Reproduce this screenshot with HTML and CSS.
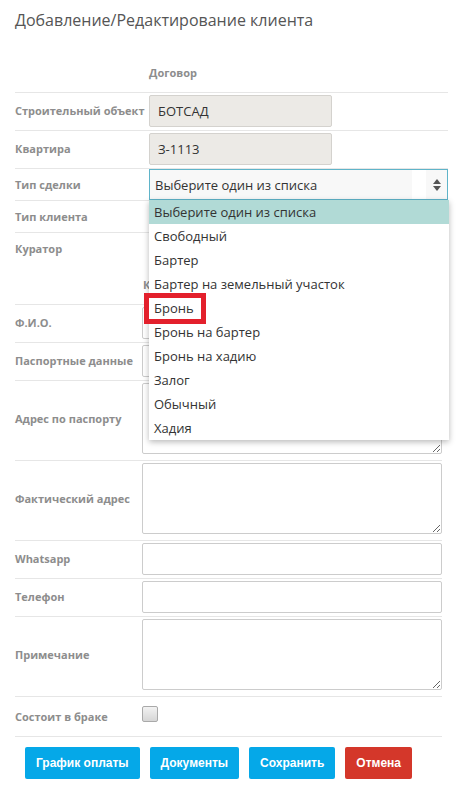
FILE: index.html
```html
<!DOCTYPE html>
<html lang="ru">
<head>
<meta charset="utf-8">
<title>Добавление/Редактирование клиента</title>
<link rel="stylesheet" href="styles.css">
</head>
<body>
<div class="page">
  <h1 class="title">Добавление/Редактирование клиента</h1>

  <section class="sec sec-top">
    <div class="sec-head"><span class="head-cell">Договор</span></div>
    <div class="row">
      <label class="lbl">Строительный объект</label>
      <div class="cell"><div class="inp inp-dis inp-short">БОТСАД</div></div>
    </div>
    <div class="row">
      <label class="lbl">Квартира</label>
      <div class="cell"><div class="inp inp-dis inp-short">З-1113</div></div>
    </div>
    <div class="row row-sel">
      <label class="lbl">Тип сделки</label>
      <div class="cell cell-rel">
        <div class="select">
          <span class="sel-text">Выберите один из списка</span>
          <span class="sel-gap"></span>
          <svg class="sel-arrows" width="10" height="16" viewBox="0 0 10 16"><path d="M5 2 L9 7 H1 Z" fill="#555"/><path d="M5 14 L9 9 H1 Z" fill="#555"/></svg>
        </div>
        <ul class="dropdown">
          <li class="opt opt-active">Выберите один из списка</li>
          <li class="opt">Свободный</li>
          <li class="opt">Бартер</li>
          <li class="opt">Бартер на земельный участок</li>
          <li class="opt">Бронь</li>
          <li class="opt">Бронь на бартер</li>
          <li class="opt">Бронь на хадию</li>
          <li class="opt">Залог</li>
          <li class="opt">Обычный</li>
          <li class="opt">Хадия</li>
          <li class="mark"></li>
        </ul>
      </div>
    </div>
    <div class="row row-sel">
      <label class="lbl">Тип клиента</label>
      <div class="cell"><div class="select select-plain"></div></div>
    </div>
    <div class="row row-sel">
      <label class="lbl">Куратор</label>
      <div class="cell"><div class="select select-plain"></div></div>
    </div>
  </section>

  <section class="sec sec-bottom">
    <div class="sec-head sec-head2"><span class="head-cell">К</span></div>
    <div class="row">
      <label class="lbl">Ф.И.О.</label>
      <div class="cell"><div class="inp"></div></div>
    </div>
    <div class="row">
      <label class="lbl">Паспортные данные</label>
      <div class="cell"><div class="inp"></div></div>
    </div>
    <div class="row row-ta">
      <label class="lbl">Адрес по паспорту</label>
      <div class="cell"><textarea class="ta"></textarea></div>
    </div>
    <div class="row row-ta">
      <label class="lbl">Фактический адрес</label>
      <div class="cell"><textarea class="ta"></textarea></div>
    </div>
    <div class="row">
      <label class="lbl">Whatsapp</label>
      <div class="cell"><div class="inp"></div></div>
    </div>
    <div class="row">
      <label class="lbl">Телефон</label>
      <div class="cell"><div class="inp"></div></div>
    </div>
    <div class="row row-ta">
      <label class="lbl">Примечание</label>
      <div class="cell"><textarea class="ta"></textarea></div>
    </div>
    <div class="row row-chk">
      <label class="lbl">Состоит в браке</label>
      <div class="cell"><span class="chk"></span></div>
    </div>
  </section>

  <div class="actions">
    <button class="btn btn-blue">График оплаты</button>
    <button class="btn btn-blue">Документы</button>
    <button class="btn btn-blue">Сохранить</button>
    <button class="btn btn-red">Отмена</button>
  </div>
</div>
</body>
</html>
```

FILE: styles.css
```css
* { box-sizing: border-box; }
html, body { margin: 0; padding: 0; background: #fff; }
body { font-family: "Open Sans", "Liberation Sans", sans-serif; color: #333; }

.page { padding: 0 0 0 15px; width: 473px; }

.title {
  margin: 0;
  padding-top: 9px;
  font-size: 16px;
  line-height: 22px;
  font-weight: 400;
  color: #555;
}

.sec-top { width: 433px; margin-top: 21px; }
.sec-bottom { width: 427px; }

.sec-head {
  height: 40px;
  padding-top: 12px;
  padding-left: 134px;
  font-size: 11px;
  line-height: 18px;
  font-weight: 700;
  color: #8d8d8d;
}
.sec-head2 { padding-left: 128px; padding-top: 12px; }

.row {
  display: grid;
  grid-template-columns: 134px 1fr;
  align-items: center;
  border-top: 1px solid #e6e6e6;
  padding: 2px 0 3px;
}
.sec-bottom .row { grid-template-columns: 127px 1fr; }

.lbl {
  font-size: 11px;
  font-weight: 700;
  color: #8d8d8d;
  line-height: 16px;
  white-space: nowrap;
}

.cell { min-width: 0; }
.cell-rel { position: relative; }

.inp {
  height: 32px;
  border: 1px solid #ccc;
  border-radius: 2px;
  background: #fff;
  font-size: 13px;
  line-height: 30px;
  padding: 0 8px;
  color: #333;
}
.inp-dis { background: #eceae6; border-color: #d4d2ce; }
.inp-short { width: 183px; }

.row-sel { padding: 0; }
.select {
  height: 31px;
  border: 1px solid #5fb4c9;
  background: #f8f8f8;
  display: flex;
  align-items: center;
  padding-left: 5px;
  font-size: 13px;
  color: #333;
}
.select-plain { border-color: #ccc; background: #fff; }
.sel-text { flex: 1; }
.sel-gap { width: 14px; height: 29px; background: #fff; }
.sel-arrows { margin: 0 5px 0 6px; }

.dropdown {
  position: absolute;
  top: 100%;
  left: 0;
  width: 300px;
  margin: 0;
  padding: 0;
  list-style: none;
  background: #fff;
  box-shadow: 0 2px 6px rgba(0, 0, 0, 0.28);
  z-index: 5;
}
.opt {
  height: 24px;
  line-height: 24px;
  padding-left: 5px;
  font-size: 13px;
  color: #333;
}
.opt-active { background: #b1dad6; }
.mark {
  position: absolute;
  left: -5px;
  top: 93px;
  width: 62px;
  height: 31px;
  border: 5px solid #e3202c;
}

.row-ta { padding: 2px 0 6px; }
.ta {
  display: block;
  width: 100%;
  height: 71px;
  border: 1px solid #ccc;
  border-radius: 2px;
  margin: 0;
  resize: both;
  font-family: inherit;
}

.row-chk { padding: 0; height: 40px; }
.chk {
  display: block;
  width: 16px;
  height: 16px;
  margin-top: -5px;
  border: 1px solid #a9a9a9;
  border-radius: 2px;
  background: linear-gradient(#f2f2f2, #d6d6d6);
}

.sec-bottom { border-bottom: 1px solid #e6e6e6; }

.actions {
  display: flex;
  gap: 10px;
  padding: 10px 0 0 10px;
}
.btn {
  height: 32px;
  border: none;
  border-radius: 2px;
  padding: 0 11px;
  font-family: "Liberation Sans", Arial, sans-serif;
  font-size: 12px;
  font-weight: 700;
  color: #fff;
  cursor: pointer;
}
.btn-blue { background: #05a8e8; }
.btn-red { background: #d4372a; }
```
